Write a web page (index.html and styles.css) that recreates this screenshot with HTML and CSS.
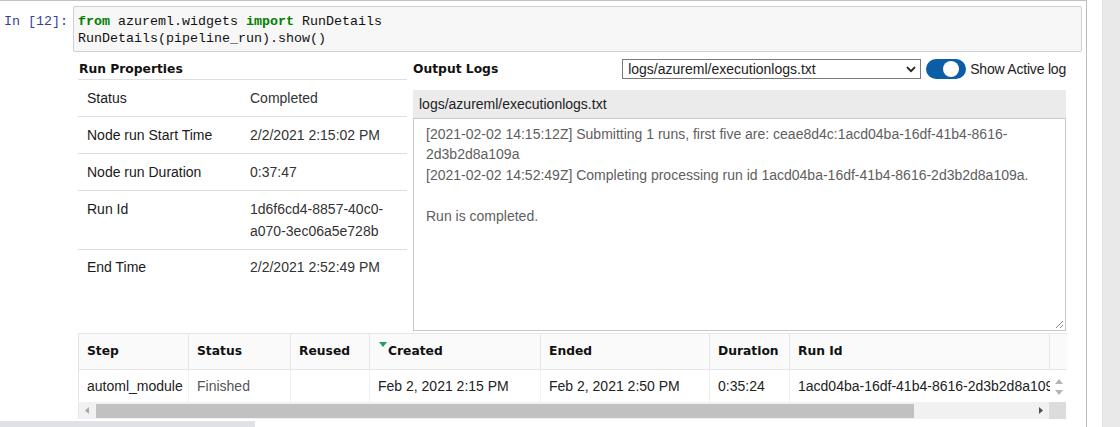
FILE: index.html
```html
<!DOCTYPE html>
<html>
<head>
<meta charset="utf-8">
<link rel="stylesheet" href="styles.css">
</head>
<body>
<div class="page">
  <div class="cell">
    <div class="input">
      <div class="prompt">In&nbsp;[12]:</div>
      <div class="code">
        <div class="cl"><span class="kw">from</span> azureml.widgets <span class="kw">import</span> RunDetails</div>
        <div class="cl">RunDetails(pipeline_run).show()</div>
      </div>
    </div>
    <div class="output">
      <div class="widget">
        <div class="top">
          <div class="props">
            <div class="title">Run Properties</div>
            <div class="prow"><div class="k">Status</div><div class="v">Completed</div></div>
            <div class="prow"><div class="k">Node run Start Time</div><div class="v">2/2/2021 2:15:02 PM</div></div>
            <div class="prow"><div class="k">Node run Duration</div><div class="v">0:37:47</div></div>
            <div class="prow"><div class="k">Run Id</div><div class="v">1d6f6cd4-8857-40c0-<br>a070-3ec06a5e728b</div></div>
            <div class="prow last"><div class="k">End Time</div><div class="v">2/2/2021 2:52:49 PM</div></div>
          </div>
          <div class="logs">
            <div class="loghead">
              <div class="ltitle">Output Logs</div>
              <div class="select"><span>logs/azureml/executionlogs.txt</span>
                <svg class="chev" width="10" height="7" viewBox="0 0 10 7"><path d="M1 1.2 L5 5.2 L9 1.2" fill="none" stroke="#222" stroke-width="1.9"/></svg>
              </div>
              <div class="toggle"><span class="knob"></span></div>
              <span class="toglabel">Show Active log</span>
            </div>
            <div class="logbar">logs/azureml/executionlogs.txt</div>
            <div class="logbox">
              <div class="line">[2021-02-02 14:15:12Z] Submitting 1 runs, first five are: ceae8d4c:1acd04ba-16df-41b4-8616-</div>
              <div class="line">2d3b2d8a109a</div>
              <div class="line">[2021-02-02 14:52:49Z] Completing processing run id 1acd04ba-16df-41b4-8616-2d3b2d8a109a.</div>
              <div class="line">&nbsp;</div>
              <div class="line">Run is completed.</div>
              <svg class="grip" width="10" height="10" viewBox="0 0 10 10"><path d="M9 2 L2 9 M9 6 L6 9" stroke="#888" stroke-width="1"/></svg>
            </div>
          </div>
        </div>
        <div class="grid">
          <div class="h">Step</div>
          <div class="h">Status</div>
          <div class="h">Reused</div>
          <div class="h sorted"><span class="sorttri"></span>Created</div>
          <div class="h">Ended</div>
          <div class="h">Duration</div>
          <div class="h">Run Id</div>
          <div class="h blank"></div>
          <div class="c">automl_module</div>
          <div class="c muted">Finished</div>
          <div class="c"></div>
          <div class="c">Feb 2, 2021 2:15 PM</div>
          <div class="c">Feb 2, 2021 2:50 PM</div>
          <div class="c">0:35:24</div>
          <div class="c clip">1acd04ba-16df-41b4-8616-2d3b2d8a109a</div>
          <div class="c vs">
            <svg width="8" height="5" viewBox="0 0 8 5"><path d="M0 5 L4 0 L8 5 Z" fill="#b4b4b4"/></svg>
            <svg width="8" height="5" viewBox="0 0 8 5"><path d="M0 0 L4 5 L8 0 Z" fill="#b4b4b4"/></svg>
          </div>
        </div>
        <div class="hbar">
          <div class="track">
            <div class="arr"><svg width="4" height="7" viewBox="0 0 4 7"><path d="M4 0 L0 3.5 L4 7 Z" fill="#a8a8a8"/></svg></div>
            <div class="thumb"></div>
            <div class="fill"></div>
            <div class="arr"><svg width="4" height="7" viewBox="0 0 4 7"><path d="M0 0 L4 3.5 L0 7 Z" fill="#505050"/></svg></div>
          </div>
          <div class="corner"></div>
        </div>
      </div>
    </div>
    <div class="pagebar"></div>
  </div>
  <div class="gap"></div>
  <div class="rail"></div>
</div>
</body>
</html>
```

FILE: styles.css
```css
* { box-sizing: border-box; }
html, body { margin: 0; padding: 0; }
body {
  background: #fff;
  overflow: hidden;
  font-family: "Liberation Sans", Arial, sans-serif;
  color: #222;
}
.page { display: flex; height: 427px; }
.cell {
  width: 1087px;
  flex: none;
  border-top: 1px solid #c2c2c2;
  border-right: 1px solid #bdbdbd;
  display: flex;
  flex-direction: column;
}
.gap { width: 15px; flex: none; }
.rail { flex: 1; background: #e9e9e9; border-left: 1px solid #e2e2e2; }

.input { display: flex; margin-top: 5px; }
.prompt {
  width: 73px;
  padding: 7px 0 0 4px;
  font: 13.33px/17px "Liberation Mono", "Courier New", monospace;
  color: #303f9f;
}
.code {
  width: 1009px;
  height: 46px;
  background: #f7f7f7;
  border: 1px solid #cfcfcf;
  border-radius: 2px;
  padding: 6px 4px;
  font: 13.33px/17px "Liberation Mono", "Courier New", monospace;
  color: #111;
}
.cl { white-space: pre; }
.kw { color: #008000; font-weight: bold; }

.output { padding: 7px 0 0 78px; }
.widget { width: 988px; }
.top { display: flex; gap: 6px; }

.props { width: 329px; flex: none; }
.title, .ltitle {
  font-family: "DejaVu Sans", Verdana, sans-serif;
  font-weight: bold;
  font-size: 12.3px;
  line-height: 20px;
  color: #111;
}
.title { height: 21px; padding-left: 1px; border-bottom: 1px solid #dedede; }
.prow {
  display: flex;
  padding: 7px 0;
  border-bottom: 1px solid #dedede;
  font-size: 14px;
  line-height: 22px;
}
.prow.last { border-bottom: none; padding-top: 6px; }
.prow .k { width: 172px; padding-left: 9px; color: #1a1a1a; }
.prow .v { color: #333; }

.logs { width: 653px; flex: none; }
.loghead { display: flex; align-items: center; height: 20px; }
.ltitle { flex: 1; }
.select {
  width: 299px;
  height: 20px;
  border: 1px solid #7a7a7a;
  display: flex;
  align-items: center;
  justify-content: space-between;
  padding: 0 4px 0 5px;
  font-size: 14px;
  color: #222;
}
.chev { margin-top: 1px; }
.toggle {
  width: 40px;
  height: 20px;
  margin-left: 5px;
  border-radius: 10px;
  background: #0b5ea6;
  display: flex;
  align-items: center;
  justify-content: flex-end;
  padding-right: 7px;
}
.knob { width: 16px; height: 16px; border-radius: 50%; background: #fff; }
.toglabel { margin-left: 4px; font-size: 14px; letter-spacing: -0.2px; color: #222; white-space: nowrap; }

.logbar {
  margin-top: 11px;
  height: 28px;
  line-height: 28px;
  background: #ebebeb;
  padding-left: 6px;
  font-size: 14px;
  color: #222;
}
.logbox {
  position: relative;
  height: 213px;
  border: 1px solid #c8c8c8;
  padding: 5px 12px;
  font-size: 14px;
  line-height: 20.4px;
  color: #5e5e5e;
}
.line { white-space: nowrap; }
.grip { position: absolute; right: 1px; bottom: 1px; }

.grid {
  margin-top: 2px;
  display: grid;
  grid-template-columns: 110px 102px 79px 171px 169px 80px 260px 17px;
  border-left: 1px solid #e6e6e6;
}
.h {
  position: relative;
  height: 36px;
  line-height: 35px;
  padding-left: 8px;
  background: #fafafa;
  border-top: 1px solid #e6e6e6;
  border-right: 1px solid #e6e6e6;
  font-family: "DejaVu Sans", Verdana, sans-serif;
  font-weight: bold;
  font-size: 12.3px;
  color: #111;
}
.h.sorted { padding-left: 18px; }
.h.blank { border-right: none; }
.sorttri {
  position: absolute;
  left: 9px;
  top: 8px;
  width: 0;
  height: 0;
  border-left: 4.5px solid transparent;
  border-right: 4.5px solid transparent;
  border-top: 5px solid #1f9e63;
}
.c {
  height: 33px;
  line-height: 32px;
  padding-left: 8px;
  border-top: 1px solid #e6e6e6;
  border-right: 1px solid #f0f0f0;
  font-size: 14px;
  color: #222;
  white-space: nowrap;
  overflow: hidden;
}
.c.muted { color: #555; }
.c.clip { border-right: none; padding-right: 2px; }
.c.vs {
  padding: 9px 0 0 0;
  border-right: none;
  display: flex;
  flex-direction: column;
  align-items: center;
  gap: 6px;
}
.c.vs svg { display: block; }

.hbar { display: flex; height: 17px; border-left: 1px solid #e6e6e6; }
.track { flex: 1; display: flex; align-items: center; background: #f1f1f1; }
.arr { width: 16px; display: flex; justify-content: center; align-items: center; }
.arr svg { display: block; }
.thumb { width: 818px; height: 14px; margin-left: 1px; background: #c1c1c1; }
.fill { flex: 1; }
.corner { width: 17px; background: #dcdcdc; }

.pagebar { margin-top: 2px; width: 255px; height: 6px; background: #dee1e5; }
```
